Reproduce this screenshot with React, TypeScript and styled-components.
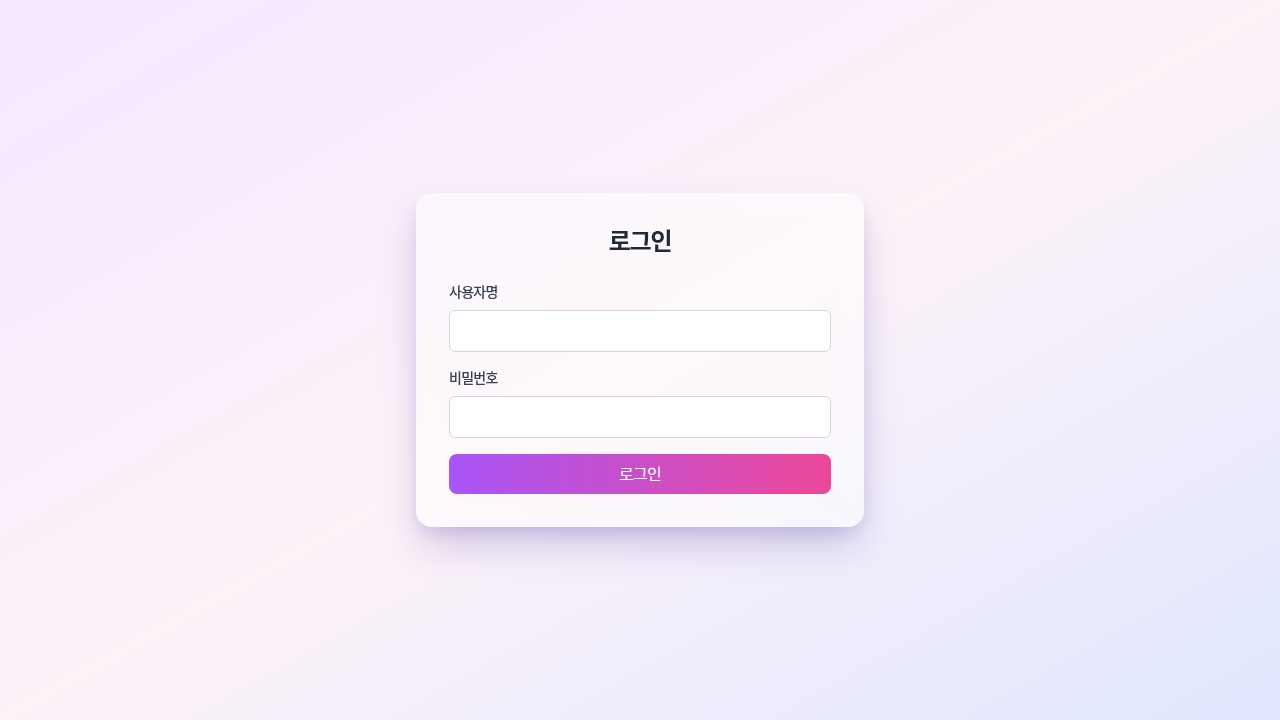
import styled, { createGlobalStyle } from "styled-components";
import { useState } from "react";

const GlobalStyle = createGlobalStyle`
* { box-sizing: border-box; }
html, body { margin: 0; padding: 0; }
body {
  font-family: Inter, 'Noto Sans CJK KR', sans-serif;
}
`

function App() {
    const [username, setUsername] = useState<string>("");
    const [password, setPassword] = useState<string>("");

    return (
        <>
        <GlobalStyle />
        <Page>
            <Card onSubmit={(e) => e.preventDefault()}>
                <Title>로그인</Title>
                <Field>
                    <Label htmlFor="username">사용자명</Label>
                    <Input id="username" value={username} onChange={(e) => setUsername(e.target.value)} />
                </Field>
                <Field>
                    <Label htmlFor="password">비밀번호</Label>
                    <Input id="password" type="password" value={password} onChange={(e) => setPassword(e.target.value)} />
                </Field>
                <SubmitButton type="submit">로그인</SubmitButton>
            </Card>
        </Page>
        </>
    )
}

const Page = styled.div`
width: 100%;
min-height: 100vh;
display: flex;
justify-content: center;
align-items: center;
background: linear-gradient(to bottom right, #f3e8ff, #fdf2f8, #e0e7ff);
`

const Card = styled.form`
width: 448px;
padding: 33px;
border-radius: 16px;
background: rgba(255, 255, 255, 0.5);
backdrop-filter: blur(8px);
box-shadow: 0 20px 40px -6px rgba(90, 70, 170, 0.3), 0 8px 16px -4px rgba(90, 70, 170, 0.14);
display: flex;
flex-direction: column;
`

const Title = styled.h2`
margin: 0 0 24px 0;
font-size: 24px;
line-height: 32px;
font-weight: 700;
letter-spacing: -0.05em;
text-align: center;
color: #1f2937;
`

const Field = styled.div`
display: flex;
flex-direction: column;
margin-bottom: 16px;
`

const Label = styled.label`
font-size: 14px;
line-height: 20px;
font-weight: 500;
letter-spacing: -0.05em;
color: #374151;
margin-bottom: 8px;
`

const Input = styled.input`
width: 100%;
height: 42px;
padding: 10px 12px;
border: 1px solid #d1d5db;
border-radius: 6px;
background: #ffffff;
font-family: inherit;
font-size: 14px;
outline: none;
`

const SubmitButton = styled.button`
width: 100%;
height: 40px;
border: none;
border-radius: 8px;
background: linear-gradient(to right, #a855f7, #ec4899);
color: #ffffff;
font-family: inherit;
font-size: 16px;
line-height: 24px;
letter-spacing: -0.05em;
cursor: pointer;
`

export default App;
